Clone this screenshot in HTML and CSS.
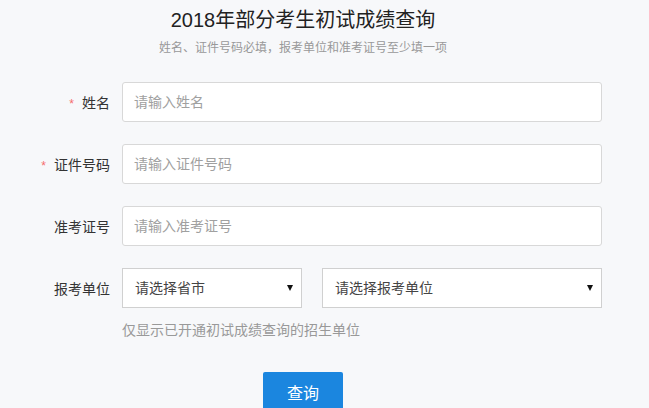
FILE: index.html
```html
<!DOCTYPE html>
<html lang="zh-CN">
<head>
<meta charset="UTF-8">
<meta name="viewport" content="width=device-width, initial-scale=1.0">
<title>2018年部分考生初试成绩查询</title>
<link rel="stylesheet" href="styles.css">
</head>
<body>

<div class="page">
    <div class="head">
        <h1 class="head-title">2018年部分考生初试成绩查询</h1>
        <p class="head-tip">姓名、证件号码必填，报考单位和准考证号至少填一项</p>
    </div>

    <form class="query-form" onsubmit="return false">
        <div class="row">
            <label class="row-label"><span class="star">*</span>姓名</label>
            <input type="text" class="txt" placeholder="请输入姓名">
        </div>
        <div class="row">
            <label class="row-label"><span class="star">*</span>证件号码</label>
            <input type="text" class="txt" placeholder="请输入证件号码">
        </div>
        <div class="row">
            <label class="row-label">准考证号</label>
            <input type="text" class="txt" placeholder="请输入准考证号">
        </div>
        <div class="row">
            <label class="row-label">报考单位</label>
            <div class="sel-wrap sel-province">
                <select class="sel">
                    <option>请选择省市</option>
                </select>
            </div>
            <div class="sel-wrap sel-unit">
                <select class="sel">
                    <option>请选择报考单位</option>
                </select>
            </div>
        </div>
        <p class="row-hint">仅显示已开通初试成绩查询的招生单位</p>
        <div class="btn-row">
            <button type="submit" class="btn">查询</button>
        </div>
    </form>
</div>

</body>
</html>
```

FILE: styles.css
```css
body {
    margin: 0;
    background-color: #f7f8fa;
    font-family: "Liberation Sans", "Noto Sans CJK SC", sans-serif;
    color: #333;
}
.page {
    width: 606px;
}
.head {
    text-align: center;
    padding-top: 6px;
}
.head-title {
    margin: 0;
    font-size: 20px;
    font-weight: normal;
    line-height: 28px;
    color: #222;
}
.head-tip {
    margin: 2px 0 0 0;
    font-size: 12px;
    line-height: 24px;
    color: #999;
}
.query-form {
    margin-top: 22px;
}
.row {
    display: flex;
    align-items: center;
    height: 40px;
    margin-bottom: 22px;
}
.row-label {
    width: 110px;
    padding-right: 12px;
    text-align: right;
    font-size: 14px;
    color: #333;
}
.star {
    color: #f56c6c;
    font-size: 12px;
    margin-right: 8px;
}
.txt {
    box-sizing: border-box;
    width: 480px;
    height: 40px;
    padding: 0 11px;
    border: 1px solid #d8d8d8;
    border-radius: 3px;
    background: #fff;
    font-family: inherit;
    font-size: 14px;
    color: #333;
    outline: none;
}
.txt::placeholder {
    color: #a0a0a0;
}
.sel-wrap {
    position: relative;
    height: 40px;
}
.sel-province {
    width: 180px;
    margin-right: 20px;
}
.sel-unit {
    width: 280px;
}
.sel {
    box-sizing: border-box;
    width: 100%;
    height: 40px;
    padding: 0 12px;
    border: 1px solid #d0d0d0;
    border-radius: 0;
    background: #fff;
    font-family: inherit;
    font-size: 14px;
    color: #444;
    appearance: none;
    -webkit-appearance: none;
    outline: none;
}
/* small black arrow like the native select */
.sel-wrap::after {
    content: "";
    position: absolute;
    right: 9px;
    top: 17px;
    border-left: 3px solid transparent;
    border-right: 3px solid transparent;
    border-top: 6px solid #111;
    pointer-events: none;
}
.row-hint {
    margin: -10px 0 0 122px;
    font-size: 14px;
    line-height: 20px;
    color: #999;
}
.btn-row {
    text-align: center;
    margin-top: 32px;
}
.btn {
    width: 80px;
    height: 40px;
    border: none;
    border-radius: 2px;
    background-color: #1b86df;
    color: #fff;
    font-family: inherit;
    font-size: 16px;
    cursor: pointer;
}
```
